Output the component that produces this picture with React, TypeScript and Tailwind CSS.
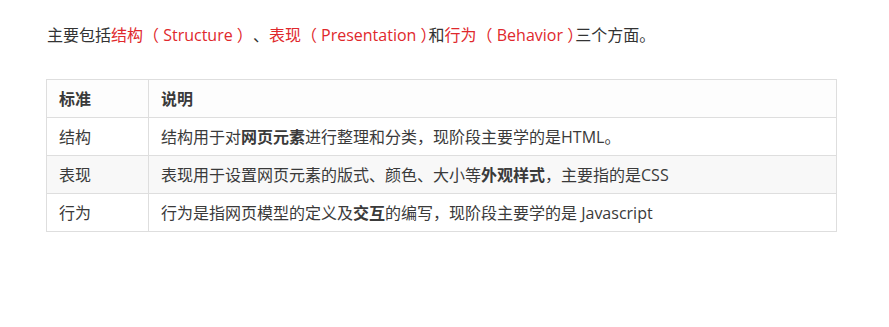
const FONT = { fontFamily: '"Open Sans", "Noto Sans CJK SC", sans-serif' };

// closing paren drawn half-width, as in the source page
const Half = ({ children }: { children: string }) => (
  <span className="[font-feature-settings:'halt']">{children}</span>
);

const ROWS = [
  {
    name: "结构",
    desc: (
      <>
        结构用于对<b className="font-bold">网页元素</b>进行整理和分类，现阶段主要学的是HTML。
      </>
    ),
  },
  {
    name: "表现",
    desc: (
      <>
        表现用于设置网页元素的版式、颜色、大小等<b className="font-bold">外观样式</b>，主要指的是CSS
      </>
    ),
  },
  {
    name: "行为",
    desc: (
      <>
        行为是指网页模型的定义及<b className="font-bold">交互</b>的编写，现阶段主要学的是 Javascript
      </>
    ),
  },
];

export default function App() {
  return (
    <div
      className="h-[327px] w-[889px] bg-white pl-[46px] pt-[24px] text-[#333] [text-spacing-trim:space-all]"
      style={FONT}
    >
      <p className="pl-px text-[16px] leading-[22px]">
        主要包括<span className="text-[#e0282c]">结构（ Structure ）</span>、
        <span className="text-[#e0282c]">
          表现（ Presentation <Half>）</Half>
        </span>
        和
        <span className="text-[#e0282c]">
          行为（ Behavior <Half>）</Half>
        </span>
        三个方面。
      </p>

      <table className="mt-[33px] w-[791px] border-collapse text-[16px] text-[#3a3a3a]">
        <thead>
          <tr className="h-[38px] bg-[#fdfdfd]">
            <th className="w-[102px] border border-[#dedede] px-3 text-left font-bold">标准</th>
            <th className="border border-[#dedede] px-3 text-left font-bold">说明</th>
          </tr>
        </thead>
        <tbody>
          {ROWS.map((row, i) => (
            <tr key={row.name} className={`h-[38px] ${i === 1 ? "bg-[#f8f8f8]" : "bg-white"}`}>
              <td className="border border-[#dedede] px-3">{row.name}</td>
              <td className="border border-[#dedede] px-3">{row.desc}</td>
            </tr>
          ))}
        </tbody>
      </table>
    </div>
  );
}
